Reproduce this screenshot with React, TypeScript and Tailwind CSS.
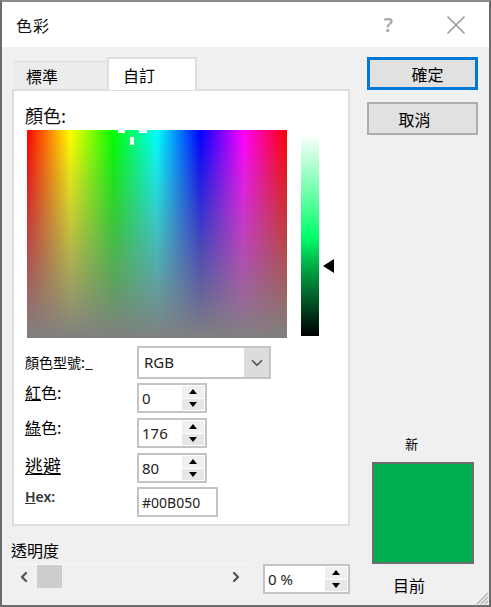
import React from 'react';
import { ChevronDown, ChevronLeft, ChevronRight, X } from 'lucide-react';

const cjk = "font-['Noto_Sans_CJK_TC','Noto_Sans',sans-serif]";

function Spin({ value, className = 'w-[70px] h-[30px]' }: { value: string; className?: string }) {
  return (
    <div className={`flex items-center border-2 border-[#c4c4c4] bg-white ${className}`}>
      <span className="flex-1 pl-[3px] font-['Noto_Sans',sans-serif] text-[15px] text-[#222] leading-none">{value}</span>
      <div className="w-[22px] h-full flex flex-col mr-[1px] py-[1px] gap-[1px]">
        <div className="flex-1 bg-[#f0f0f0] flex items-center justify-center">
          <div className="w-0 h-0 border-x-[4px] border-x-transparent border-b-[5px] border-b-black" />
        </div>
        <div className="flex-1 bg-[#e6e6e6] flex items-center justify-center">
          <div className="w-0 h-0 border-x-[4px] border-x-transparent border-t-[5px] border-t-black" />
        </div>
      </div>
    </div>
  );
}

function Row({ label, children, className = '' }: { label: React.ReactNode; children: React.ReactNode; className?: string }) {
  return (
    <div className={`flex items-start ${className}`}>
      <div className="w-[112px] text-black">{label}</div>
      {children}
    </div>
  );
}

export default function App() {
  return (
    <div className={`w-[491px] h-[607px] flex flex-col border-2 border-[#6b6b6b] border-t-[#8c8c8c] bg-[#f0f0f0] relative overflow-hidden ${cjk}`}>
      <div className="h-[45px] shrink-0 bg-white flex items-center pl-[14px] pr-[17px] text-[#111]">
        <span className="text-[16px] tracking-[1px]">色彩</span>
        <span className="ml-auto mr-[47px] text-[20px] text-[#a8a8a8] font-['Noto_Sans',sans-serif] font-semibold">?</span>
        <X className="w-[32px] h-[32px] text-[#9a9a9a]" strokeWidth={1.25} />
      </div>

      <div className="flex-1 flex pl-[10px] pt-[10px]">
        <div className="w-[338px]">
          <div className="flex h-[32px] pl-[2px] items-end relative z-10">
            <div className="w-[93px] h-[28px] bg-[#ececec] border-t border-[#dcdcdc] pl-[12px] text-[16px] text-black flex items-center">標準</div>
            <div className="w-[90px] h-[33px] -mb-[1px] bg-white border-x-2 border-t-2 border-[#dedede] pl-[14px] text-[16px] text-black flex items-center">自訂</div>
          </div>

          <div className="h-[437px] bg-white border-2 border-[#dedede] pl-[11px] pt-[13px]">
            <div className="text-[18px] leading-[22px] h-[26px] text-[#111]">顏色:</div>
            <div className="flex items-start ml-[2px]">
              <div className="relative w-[260px] h-[208px] bg-[linear-gradient(to_bottom,rgba(128,128,128,0),#808080),linear-gradient(to_right,#f00,#ff0,#0f0,#0ff,#00f,#f0f,#f00)]">
                <div className="absolute left-[91px] top-0 w-[7px] h-[3px] bg-white" />
                <div className="absolute left-[112px] top-0 w-[8px] h-[3px] bg-white" />
                <div className="absolute left-[103px] top-[7px] w-[4px] h-[8px] bg-white" />
              </div>
              <div className="w-[18px] h-[198px] ml-[14px] mt-[8px] bg-[linear-gradient(to_bottom,#f4fff9,#00ff6a_50%,#009a40_68%,#000)]" />
              <div className="w-0 h-0 ml-[4px] mt-[129px] border-y-[7px] border-y-transparent border-r-[11px] border-r-black" />
            </div>

            <div className="mt-[8px] flex flex-col gap-[5px]">
              <Row label={<div className="text-[14px] leading-[24px] mt-[4px]">顏色型號:_</div>} className="-mb-[1px]">
                <div className="w-[134px] h-[33px] flex items-center border-2 border-[#c4c4c4] bg-white">
                  <span className="flex-1 pl-[5px] font-['Noto_Sans',sans-serif] text-[15px] text-[#222]">RGB</span>
                  <div className="w-[25px] h-full bg-[#dcdcdc] flex items-center justify-center">
                    <ChevronDown className="w-[18px] h-[18px] text-[#555]" strokeWidth={2.25} />
                  </div>
                </div>
              </Row>
              <Row label={<div className="text-[16px] leading-[20px] -mt-[1px]"><u>紅</u>色:</div>}>
                <Spin value="0" />
              </Row>
              <Row label={<div className="text-[16px] leading-[20px] -mt-[1px]"><u>綠</u>色:</div>}>
                <Spin value="176" />
              </Row>
              <Row label={<div className="text-[18px] leading-[24px] underline">逃避</div>}>
                <Spin value="80" />
              </Row>
              <Row label={<div className="font-['Noto_Sans',sans-serif] text-[14px] font-semibold text-[#333] leading-[20px]"><u>H</u>ex:</div>} className="-mt-[1px]">
                <div className="w-[81px] h-[30px] flex items-center border-2 border-[#c4c4c4] bg-white pl-[3px] font-['Noto_Sans',sans-serif] text-[14px] text-[#222]">#00B050</div>
              </Row>
            </div>
          </div>

          <div className="mt-[14px] -ml-[1px] text-[16px] leading-[20px] text-black">透明度</div>
          <div className="flex items-start mt-[4px]">
            <div className="w-[240px] h-[24px] flex items-center border-t border-dotted border-white">
              <ChevronLeft className="ml-[4px] w-[16px] h-[16px] text-[#555]" strokeWidth={3.5} />
              <div className="ml-[5px] w-[25px] h-[23px] bg-[#cdcdcd]" />
              <ChevronRight className="ml-auto mr-[5px] w-[16px] h-[16px] text-[#555]" strokeWidth={3.5} />
            </div>
            <Spin value="0 %" className="ml-[14px] w-[88px] h-[30px]" />
          </div>
        </div>

        <div className="w-[111px] ml-[17px] flex flex-col">
          <button className="h-[33px] border-[3px] border-[#0078d7] bg-[#e1e1e1] text-[16px] text-black pl-[10px] text-center">確定</button>
          <button className="h-[33px] mt-[12px] border-2 border-[#adadad] bg-[#e1e1e1] text-[16px] text-black pr-[16px] text-center">取消</button>
          <div className="mt-[300px] pl-[38px] text-[13px] leading-[18px] text-black">新</div>
          <div className="mt-[9px] ml-[5px] w-[102px] h-[102px] bg-[#00b050] border-2 border-[#6e6e6e]" />
          <div className="mt-[11px] pl-[26px] text-[16px] leading-[20px] text-black">目前</div>
        </div>
      </div>

      <svg className="absolute right-0 bottom-0 w-[14px] h-[14px]" viewBox="0 0 14 14">
        <path d="M13 2 L2 13 M13 6 L6 13 M13 10 L10 13" stroke="#b5b5b5" strokeWidth="1.5" fill="none" />
      </svg>
    </div>
  );
}
